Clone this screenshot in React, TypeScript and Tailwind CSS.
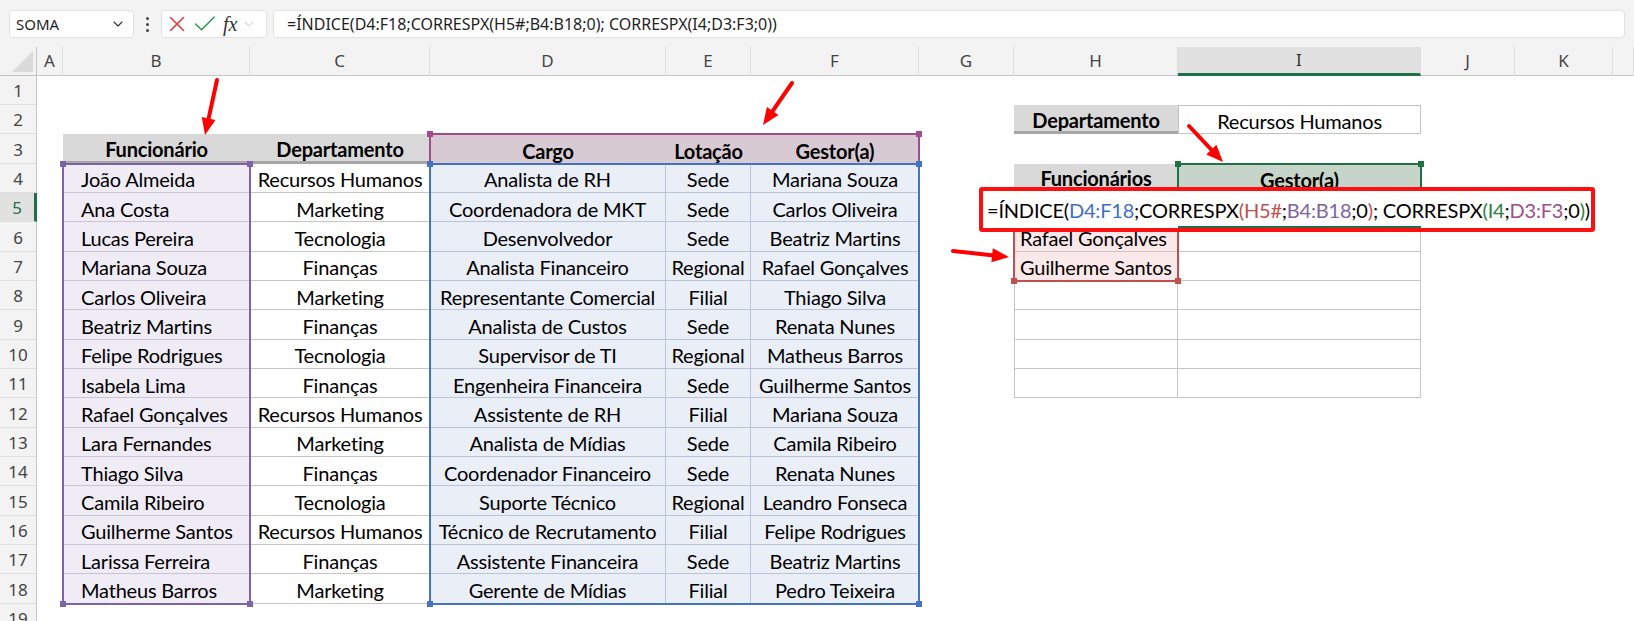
import React from 'react';
import { X, Check, ChevronDown } from 'lucide-react';

const COL = ['', 'col-start-1', 'col-start-2', 'col-start-3', 'col-start-4', 'col-start-5', 'col-start-6', 'col-start-7', 'col-start-8', 'col-start-9', 'col-start-10', 'col-start-11', 'col-start-12', 'col-start-13'];
const ROW = ['', 'row-start-1', 'row-start-2', 'row-start-3', 'row-start-4', 'row-start-5', 'row-start-6', 'row-start-7', 'row-start-8', 'row-start-9', 'row-start-10', 'row-start-11', 'row-start-12', 'row-start-13', 'row-start-14', 'row-start-15', 'row-start-16', 'row-start-17', 'row-start-18', 'row-start-19', 'row-start-20', 'row-start-21'];

const B = ['João Almeida', 'Ana Costa', 'Lucas Pereira', 'Mariana Souza', 'Carlos Oliveira', 'Beatriz Martins', 'Felipe Rodrigues', 'Isabela Lima', 'Rafael Gonçalves', 'Lara Fernandes', 'Thiago Silva', 'Camila Ribeiro', 'Guilherme Santos', 'Larissa Ferreira', 'Matheus Barros'];
const Cc = ['Recursos Humanos', 'Marketing', 'Tecnologia', 'Finanças', 'Marketing', 'Finanças', 'Tecnologia', 'Finanças', 'Recursos Humanos', 'Marketing', 'Finanças', 'Tecnologia', 'Recursos Humanos', 'Finanças', 'Marketing'];
const D = ['Analista de RH', 'Coordenadora de MKT', 'Desenvolvedor', 'Analista Financeiro', 'Representante Comercial', 'Analista de Custos', 'Supervisor de TI', 'Engenheira Financeira', 'Assistente de RH', 'Analista de Mídias', 'Coordenador Financeiro', 'Suporte Técnico', 'Técnico de Recrutamento', 'Assistente Financeira', 'Gerente de Mídias'];
const E = ['Sede', 'Sede', 'Sede', 'Regional', 'Filial', 'Sede', 'Regional', 'Sede', 'Filial', 'Sede', 'Sede', 'Regional', 'Filial', 'Sede', 'Filial'];
const F = ['Mariana Souza', 'Carlos Oliveira', 'Beatriz Martins', 'Rafael Gonçalves', 'Thiago Silva', 'Renata Nunes', 'Matheus Barros', 'Guilherme Santos', 'Mariana Souza', 'Camila Ribeiro', 'Renata Nunes', 'Leandro Fonseca', 'Felipe Rodrigues', 'Beatriz Martins', 'Pedro Teixeira'];

const LETTERS = ['A', 'B', 'C', 'D', 'E', 'F', 'G', 'H', 'I', 'J', 'K', ''];

function Cell({ c, r, cls, children }: { c: number; r: number; cls?: string; children?: React.ReactNode }) {
  return (
    <div className={`${COL[c]} ${ROW[r]} flex items-center overflow-hidden whitespace-nowrap leading-none pt-[3px] ${cls ?? ''}`}>
      {children}
    </div>
  );
}

function Handles({ bg }: { bg: string }) {
  return (
    <>
      <div className={`absolute -left-[4px] -top-[4px] w-[6px] h-[6px] ${bg}`} />
      <div className={`absolute -right-[4px] -top-[4px] w-[6px] h-[6px] ${bg}`} />
      <div className={`absolute -left-[4px] -bottom-[4px] w-[6px] h-[6px] ${bg}`} />
      <div className={`absolute -right-[4px] -bottom-[4px] w-[6px] h-[6px] ${bg}`} />
    </>
  );
}

function Arrow({ x1, y1, x2, y2 }: { x1: number; y1: number; x2: number; y2: number }) {
  const dx = x2 - x1;
  const dy = y2 - y1;
  const len = Math.hypot(dx, dy);
  const ux = dx / len;
  const uy = dy / len;
  const hl = 17;
  const hw = 7;
  const bx = x2 - ux * hl;
  const by = y2 - uy * hl;
  const px = -uy;
  const py = ux;
  const pts = `${x2},${y2} ${bx + px * hw},${by + py * hw} ${bx - px * hw},${by - py * hw}`;
  return (
    <g>
      <line x1={x1} y1={y1} x2={bx + ux * 2} y2={by + uy * 2} stroke="#ff0000" strokeWidth={4} strokeLinecap="round" />
      <polygon points={pts} fill="#ff0000" />
    </g>
  );
}

export default function App() {
  const cellFont = "font-['Lato',_'Liberation_Sans',_sans-serif] text-[20px] tracking-[-0.2px] text-black";
  return (
    <div className="relative w-[1634px] h-[621px] overflow-hidden bg-white">
      {/* Formula bar */}
      <div className="h-[47px] bg-[#f3f3f3] flex items-start pt-[10px] pl-[9px] font-['Noto_Sans',_sans-serif]">
        <div className="w-[125px] h-[28px] bg-white border border-[#e1e1e1] rounded-[4px] flex items-center justify-between pl-[6px] pr-[7px] text-[15px] text-[#1f1f1f]">
          <span>SOMA</span>
          <ChevronDown size={16} strokeWidth={1.6} color="#333" />
        </div>
        <div className="w-[27px] h-[28px] flex flex-col items-center justify-center gap-[3px]">
          <div className="w-[3px] h-[3px] rounded-full bg-[#444]" />
          <div className="w-[3px] h-[3px] rounded-full bg-[#444]" />
          <div className="w-[3px] h-[3px] rounded-full bg-[#444]" />
        </div>
        <div className="w-[106px] h-[28px] bg-white border border-[#e1e1e1] rounded-[4px] flex items-center pl-[0px]">
          <div className="w-[32px] flex items-center justify-center -ml-[1px]">
            <X size={26} strokeWidth={1.4} color="#e0393e" />
          </div>
          <div className="w-[30px] flex items-center justify-center -ml-[3px]">
            <Check size={28} strokeWidth={1.3} color="#2e9c4d" />
          </div>
          <span className="ml-[3px] font-['Liberation_Serif',_serif] italic text-[20px] text-[#333] leading-none">fx</span>
          <ChevronDown size={14} strokeWidth={1.2} color="#aaa" className="ml-[5px]" />
        </div>
        <div className="ml-[6px] w-[1352px] h-[28px] bg-white border border-[#e1e1e1] rounded-[4px] flex items-center pl-[13px] text-[16px] text-[#1f1f1f]">
          =ÍNDICE(D4:F18;CORRESPX(H5#;B4:B18;0); CORRESPX(I4;D3:F3;0))
        </div>
      </div>

      {/* Sheet */}
      <div className={`relative grid grid-cols-[37px_26px_187px_180px_236px_85px_168px_95px_164px_243px_94px_98px_1fr] grid-rows-[28.7px_repeat(19,29.33px)] ${cellFont}`}>
        {/* corner */}
        <div className="col-start-1 row-start-1 bg-[#f3f3f3] border-r border-b border-[#c6c6c6] relative">
          <div className="absolute right-[3px] bottom-[3px] w-0 h-0 border-l-[21px] border-l-transparent border-b-[21px] border-b-[#dadada]" />
        </div>
        {LETTERS.map((l, i) => (
          <div
            key={i}
            className={`${COL[i + 2]} row-start-1 flex items-center justify-center font-['Noto_Sans',_sans-serif] tracking-normal text-[17px] ${l === 'I' ? 'bg-[#e1e1e1] border-b-[3px] border-b-[#1e7145] text-[#333]' : 'bg-[#f3f3f3] border-b border-b-[#c6c6c6] text-[#444]'} border-r border-r-[#dedede]`}
          >
            {l}
          </div>
        ))}
        {Array.from({ length: 19 }, (_, i) => i + 1).map((n) => (
          <div
            key={n}
            className={`col-start-1 ${ROW[n + 1]} flex items-center justify-center pt-[2px] font-['Noto_Sans',_sans-serif] tracking-normal text-[17px] border-b border-b-[#dedede] ${n === 5 ? 'bg-[#e1e1e1] text-[#1e7145] border-r-[3px] border-r-[#1e7145]' : 'bg-[#f3f3f3] text-[#444] border-r border-r-[#c6c6c6]'}`}
          >
            {n}
          </div>
        ))}

        {/* Left table headers */}
        <Cell c={3} r={4} cls="bg-[#d9d9d9] justify-center font-bold border-b-[3px] border-[#a6a6a6]">Funcionário</Cell>
        <Cell c={4} r={4} cls="bg-[#d9d9d9] justify-center font-bold border-b-[3px] border-[#a6a6a6]">Departamento</Cell>
        <Cell c={5} r={4} cls="bg-[#d8cad2] justify-center font-bold">Cargo</Cell>
        <Cell c={6} r={4} cls="bg-[#d8cad2] justify-center font-bold">Lotação</Cell>
        <Cell c={7} r={4} cls="bg-[#d8cad2] justify-center font-bold">Gestor(a)</Cell>

        {B.map((v, i) => (
          <React.Fragment key={i}>
            <Cell c={3} r={i + 5} cls="bg-[#f0ecf6] border-b border-[#c9c3d8] pl-[18px]">{v}</Cell>
            <Cell c={4} r={i + 5} cls="bg-white border-b border-[#c6c6c6] justify-center">{Cc[i]}</Cell>
            <Cell c={5} r={i + 5} cls="bg-[#e9eef7] border-b border-r border-[#b9c4d8] justify-center">{D[i]}</Cell>
            <Cell c={6} r={i + 5} cls="bg-[#e9eef7] border-b border-r border-[#b9c4d8] justify-center">{E[i]}</Cell>
            <Cell c={7} r={i + 5} cls="bg-[#e9eef7] border-b border-[#b9c4d8] justify-center">{F[i]}</Cell>
          </React.Fragment>
        ))}

        {/* Right tables */}
        <Cell c={9} r={3} cls="bg-[#d9d9d9] justify-center font-bold border-b-[3px] border-[#a6a6a6]">Departamento</Cell>
        <Cell c={10} r={3} cls="border border-[#c3c3c3] justify-center">Recursos Humanos</Cell>
        <Cell c={9} r={5} cls="bg-[#d9d9d9] justify-center font-bold border-b-[3px] border-[#a6a6a6]">Funcionários</Cell>
        <Cell c={10} r={5} cls="bg-[#c7d4ca] justify-center font-bold">Gestor(a)</Cell>
        {[6, 7, 8, 9, 10, 11, 12].map((r) => (
          <React.Fragment key={r}>
            <Cell c={9} r={r} cls={`border-l border-r border-b border-[#c6c6c6] pl-[5px] ${r === 7 || r === 8 ? 'bg-[#fbe8e9]' : ''}`}>
              {r === 7 ? 'Rafael Gonçalves' : r === 8 ? 'Guilherme Santos' : ''}
            </Cell>
            <Cell c={10} r={r} cls="border-r border-b border-[#c6c6c6]" />
          </React.Fragment>
        ))}

        {/* Range highlights */}
        <div className="col-start-3 col-end-4 row-start-5 row-end-20 -m-px relative z-20 border-2 border-[#7f63a9] pointer-events-none">
          <Handles bg="bg-[#7f63a9]" />
        </div>
        <div className="col-start-5 col-end-8 row-start-4 row-end-5 -m-px relative z-20 border-2 border-[#a24c8f] pointer-events-none">
          <Handles bg="bg-[#a24c8f]" />
        </div>
        <div className="col-start-5 col-end-8 row-start-5 row-end-20 -m-px relative z-20 border-2 border-[#4473c5] pointer-events-none">
          <Handles bg="bg-[#4473c5]" />
        </div>
        <div className="col-start-9 col-end-10 row-start-6 row-end-9 -m-px relative z-20 border-2 border-[#c0504d] pointer-events-none">
          <Handles bg="bg-[#c0504d]" />
        </div>
        <div className="col-start-10 col-end-11 row-start-5 row-end-6 -m-px relative z-20 border-2 border-[#1e7145] pointer-events-none">
          <Handles bg="bg-[#1e7145]" />
        </div>

        {/* In-cell formula edit with red annotation box */}
        <div className="absolute left-[979px] top-[140px] w-[616px] h-[45px] z-30 bg-white border-[4px] border-[#ff1010] rounded-[3px]">
          <div className="absolute left-[195px] w-[243px] bottom-[0px] h-[2px] bg-[#1e7145]" />
          <div className="absolute left-[4px] top-[5px] whitespace-nowrap leading-[28px]">
            <span>=ÍNDICE(</span>
            <span className="text-[#3f6fc4]">D4:F18</span>
            <span>;CORRESPX</span>
            <span className="text-[#c0504d]">(H5#</span>
            <span>;</span>
            <span className="text-[#8064a2]">B4:B18</span>
            <span>;0</span>
            <span className="text-[#c0504d]">)</span>
            <span>; CORRESPX</span>
            <span className="text-[#2e8040]">(I4</span>
            <span>;</span>
            <span className="text-[#a24c8f]">D3:F3</span>
            <span>;0</span>
            <span className="text-[#2e8040]">)</span>
            <span>)</span>
          </div>
        </div>
      </div>

      {/* Annotation arrows */}
      <svg className="absolute left-0 top-0 z-40 pointer-events-none" width={1634} height={621}>
        <Arrow x1={217} y1={80} x2={205} y2={135} />
        <Arrow x1={792} y1={83} x2={763} y2={125} />
        <Arrow x1={1189} y1={126} x2={1223} y2={162} />
        <Arrow x1={953} y1={251} x2={1009} y2={257} />
      </svg>
    </div>
  );
}
